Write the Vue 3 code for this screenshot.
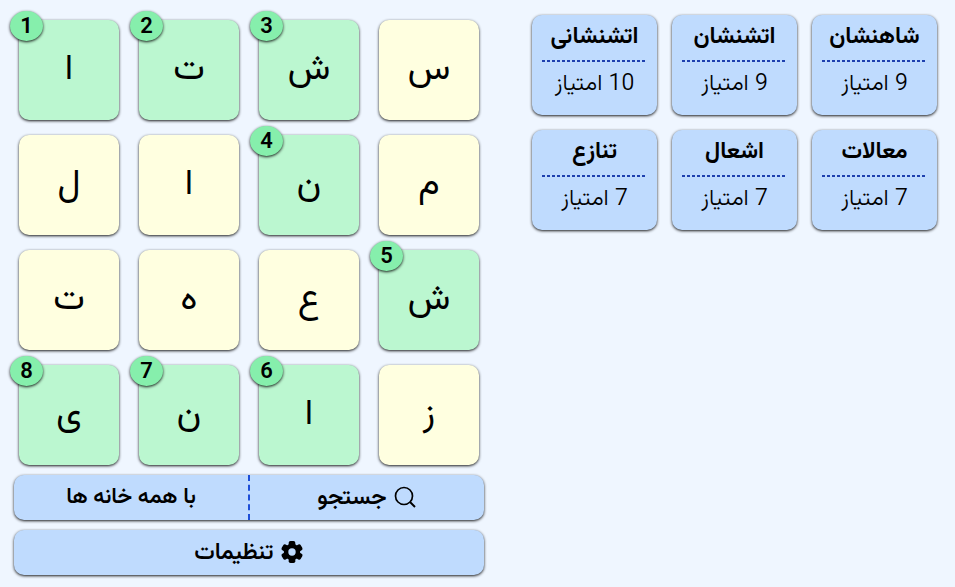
<script setup>
const tiles = [
  { letter: 'س' }, { letter: 'ش', order: 3 }, { letter: 'ت', order: 2 }, { letter: 'ا', order: 1 },
  { letter: 'م' }, { letter: 'ن', order: 4 }, { letter: 'ا' }, { letter: 'ل' },
  { letter: 'ش', order: 5 }, { letter: 'ع' }, { letter: 'ه' }, { letter: 'ت' },
  { letter: 'ز' }, { letter: 'ا', order: 6 }, { letter: 'ن', order: 7 }, { letter: 'ی', order: 8 },
]

const words = [
  { text: 'شاهنشان', score: 9 },
  { text: 'اتشنشان', score: 9 },
  { text: 'اتشنشانی', score: 10 },
  { text: 'معالات', score: 7 },
  { text: 'اشعال', score: 7 },
  { text: 'تنازع', score: 7 },
]
</script>

<template>
  <main class="page" dir="rtl" lang="fa">
    <section class="results">
      <article v-for="word in words" :key="word.text" class="card">
        <h2 class="word">{{ word.text }}</h2>
        <p class="score">{{ word.score }} امتیاز</p>
      </article>
    </section>

    <section class="board">
      <div class="tiles">
        <div v-for="(tile, i) in tiles" :key="i" class="tile" :class="{ active: tile.order }">
          <span class="letter">{{ tile.letter }}</span>
          <span v-if="tile.order" class="badge">{{ tile.order }}</span>
        </div>
      </div>

      <div class="bar">
        <button type="button" class="action">
          <svg class="icon" viewBox="0 0 24 24" aria-hidden="true">
            <circle cx="11" cy="10" r="8.500" fill="none" stroke="currentColor" stroke-width="1.700" />
            <path d="M17 16l5 5" fill="none" stroke="currentColor" stroke-width="1.900" />
          </svg>
          <span>جستجو</span>
        </button>
        <button type="button" class="action plain">با همه خانه ها</button>
      </div>

      <div class="bar">
        <button type="button" class="action">
          <svg class="icon" viewBox="0 0 24 24" aria-hidden="true">
            <g fill="currentColor">
              <circle cx="12" cy="11" r="8.200" />
              <rect v-for="n in 6" :key="n" x="8.700" y="0" width="6.600" height="7" rx="1.800" :transform="`rotate(${n * 60} 12 11)`" />
            </g>
            <circle cx="12" cy="11" r="3.700" fill="#bfdbfe" />
          </svg>
          <span>تنظیمات</span>
        </button>
      </div>
    </section>
  </main>
</template>

<style>
body {
  background: #eff6ff;
}
</style>

<style scoped>
.page {
  display: grid;
  grid-template-columns: 405fr 470fr;
  align-items: start;
  gap: 48px;
  padding: 15px 18px 12px 14px;
  font-family: Vazirmatn, Roboto, 'Noto Sans', sans-serif;
  font-size: 23px;
  color: #000;
}

.results {
  display: grid;
  grid-template-columns: repeat(3, 1fr);
  gap: 15px;
}

.card,
.tile,
.bar {
  border-radius: 10px;
  box-shadow: 0 1px 3px rgba(0, 0, 0, 0.9);
}

.card {
  box-sizing: border-box;
  height: 100px;
  padding: 0 10px;
  background: #bfdbfe;
  text-align: center;
}

.word {
  height: 47px;
  margin: 0;
  background: repeating-linear-gradient(to right, #1e40af 0 3px, transparent 3px 5px) bottom / 100% 2px no-repeat;
  font-size: 23px;
  font-weight: 700;
  line-height: 44px;
}

.score {
  margin: 0;
  font-weight: 300;
  line-height: 44px;
}

.board {
  display: flex;
  flex-direction: column;
  gap: 10px;
}

.tiles {
  display: grid;
  grid-template-columns: repeat(4, 1fr);
  gap: 15px 20px;
  padding: 5px 5px 0;
}

.tile {
  position: relative;
  display: flex;
  align-items: center;
  justify-content: center;
  height: 100px;
  background: #ffffe0;
}

.tile.active {
  background: #bbf7d0;
}

.letter {
  font-size: 36px;
  line-height: 102px;
}

.badge {
  position: absolute;
  top: -9px;
  left: -9px;
  width: 33px;
  height: 30px;
  border-radius: 50%;
  background: #86efac;
  box-shadow: 0 1px 3px rgba(0, 0, 0, 0.9);
  font-size: 22px;
  font-weight: 600;
  line-height: 34px;
  text-align: center;
}

.bar {
  display: flex;
  height: 45px;
  overflow: hidden;
  background: #bfdbfe;
}

.action {
  display: flex;
  flex: 1;
  align-items: center;
  justify-content: center;
  gap: 6px;
  padding: 0;
  border: 0;
  background: none;
  font: inherit;
  font-weight: 600;
  color: inherit;
  cursor: pointer;
}

.action.plain {
  font-size: 22px;
}

.action:not(:last-child) {
  border-left: 2px dashed #1d4ed8;
}

.icon {
  width: 24px;
  height: 24px;
}
</style>
